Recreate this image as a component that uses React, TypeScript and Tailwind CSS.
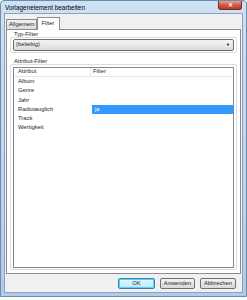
import React from "react";

const rows = [
  { name: "Album", filter: "" },
  { name: "Genre", filter: "" },
  { name: "Jahr", filter: "" },
  { name: "Radiotauglich", filter: "ja" },
  { name: "Track", filter: "" },
  { name: "Wertigkeit", filter: "" },
];

export default function App() {
  return (
    <div className="w-[247px] h-[300px] bg-white font-['Liberation_Sans',sans-serif] text-[5.8px] text-[#1e1e1e] leading-none">
      {/* window frame */}
      <div className="w-[247px] h-[297px] flex flex-col rounded-t-[4px] border border-[#6d8bab] bg-gradient-to-b from-[#cde0f4] via-[#c0d7f0] to-[#b0cbea] px-[3px] pb-[3px]">
        {/* title bar */}
        <div className="h-[12px] flex items-start justify-between">
          <span className="pt-[4px] pl-[1px] text-[6.4px] text-black">Vorlagenelement bearbeiten</span>
          <div className="w-[24px] h-[9px] mr-[1px] rounded-b-[3px] border border-t-0 border-[#7a2a22] bg-gradient-to-b from-[#e8a093] via-[#cf5a46] to-[#b93a26] flex items-center justify-center text-white text-[6px] font-bold">
            ✕
          </div>
        </div>

        {/* client area */}
        <div className="flex-1 flex flex-col bg-[#f0f0f0] border border-[#8da2ba] px-[1px] pt-[2px]">
          {/* tabs */}
          <div className="flex items-end h-[13px]">
            <div className="h-[10px] px-[2px] flex items-center border border-b-0 border-[#898c95] bg-gradient-to-b from-[#f2f2f2] to-[#dcdcdc]">
              Allgemein
            </div>
            <div className="h-[13px] w-[23px] px-[3px] flex items-center -mb-[1px] relative z-10 border border-b-0 border-[#898c95] bg-white">
              Filter
            </div>
          </div>
          <div className="h-[245px] border border-[#898c95] bg-white px-[3px] pt-[2px] flex flex-col">
            {/* Typ-Filter */}
            <span className="pl-[4px] h-[5px]">Typ-Filter</span>
            <div className="h-[16px] border border-[#d5dfe5] rounded-[2px] px-[2px] pt-[1px]">
              <div className="h-[12px] flex items-center justify-between rounded-[2px] border border-[#707070] bg-gradient-to-b from-[#f2f2f2] via-[#ebebeb] to-[#d9d9d9] pl-[2px] pr-[3px]">
                <span>(beliebig)</span>
                <span className="text-[4px] text-black">▼</span>
              </div>
            </div>

            {/* Attribut-Filter */}
            <span className="pl-[4px] mt-[6px] h-[5px]">Attribut-Filter</span>
            <div className="flex-1 mb-[3px] border border-[#d5dfe5] rounded-[2px] px-[2px] pt-[2px] pb-[1px] flex">
              <div className="flex-1 border border-[#828790] bg-white flex flex-col">
                <div className="h-[9px] flex border-b border-[#e5e5e5]">
                  <div className="w-[77px] pl-[4px] flex items-center border-r border-[#e5e5e5]">Attribut</div>
                  <div className="pl-[2px] flex items-center">Filter</div>
                </div>
                <div className="pt-[0.5px] flex flex-col">
                  {rows.map((r) => (
                    <div key={r.name} className="h-[9.2px] flex">
                      <div className="w-[78px] pl-[4px] flex items-center">{r.name}</div>
                      <div className={`flex-1 pl-[3px] flex items-center ${r.filter ? "bg-[#3399ff] text-white" : ""}`}>
                        {r.filter}
                      </div>
                    </div>
                  ))}
                </div>
              </div>
            </div>
          </div>

          {/* buttons */}
          <div className="flex-1 flex items-center justify-end gap-[5px] pr-[5px] pt-[1px]">
            <div className="w-[37px] h-[11px] flex items-center justify-center rounded-[2px] border border-[#3c7fb1] bg-gradient-to-b from-[#eaf6fd] to-[#bee6fd] shadow-[inset_0_0_0_1px_#48d8fb]">
              OK
            </div>
            <div className="w-[35px] h-[11px] flex items-center justify-center rounded-[2px] border border-[#707070] bg-gradient-to-b from-[#f2f2f2] to-[#d9d9d9]">
              Anwenden
            </div>
            <div className="w-[36px] h-[11px] flex items-center justify-center rounded-[2px] border border-[#707070] bg-gradient-to-b from-[#f2f2f2] to-[#d9d9d9]">
              Abbrechen
            </div>
          </div>
        </div>
      </div>
    </div>
  );
}
